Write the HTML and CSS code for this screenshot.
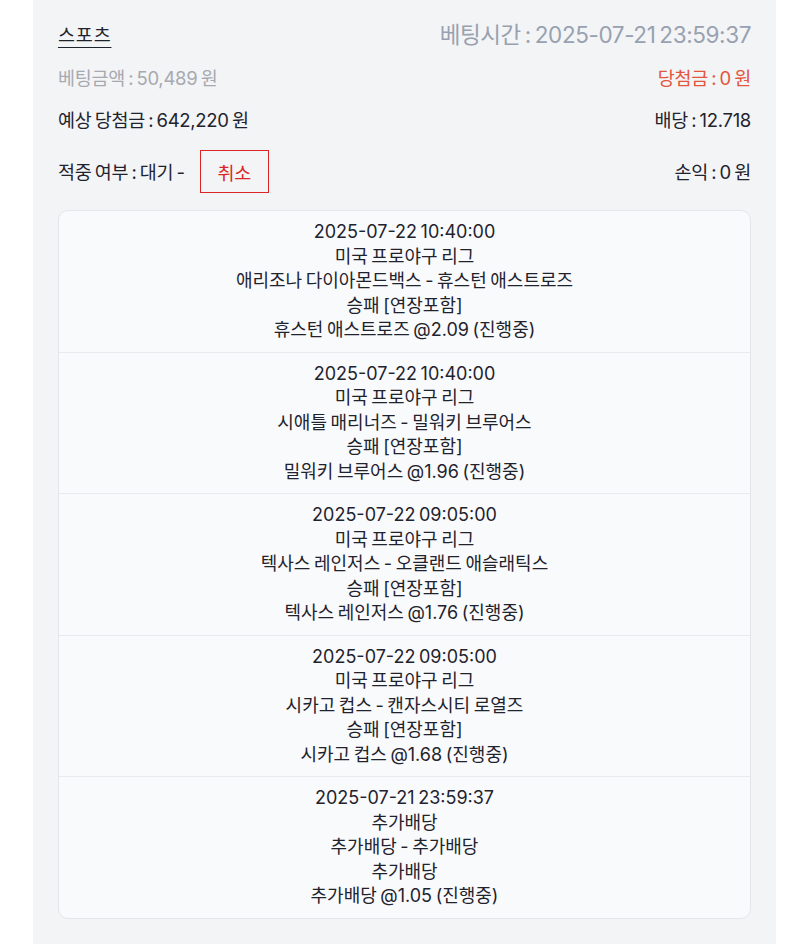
FILE: index.html
```html
<!DOCTYPE html>
<html lang="ko">
<head>
  <meta charset="UTF-8">
  <meta name="viewport" content="width=device-width, initial-scale=1.0">
  <title>베팅 상세</title>
  <link rel="stylesheet" href="styles.css">
</head>
<body>
  <div class="panel">
    <div class="row">
      <a class="game-type">스포츠</a>
      <span class="bet-time">베팅시간 : 2025-07-21 23:59:37</span>
    </div>
    <div class="row">
      <span class="bet-amount">베팅금액 : 50,489 원</span>
      <span class="win-amount">당첨금 : 0 원</span>
    </div>
    <div class="row">
      <span>예상 당첨금 : 642,220 원</span>
      <span>배당 : 12.718</span>
    </div>
    <div class="row row-status">
      <div class="status">
        <span>적중 여부 : 대기 -</span>
        <button class="cancel-btn">취소</button>
      </div>
      <span>손익 : 0 원</span>
    </div>

    <div class="bet-list">
      <div class="bet-item">
        <div>2025-07-22 10:40:00</div>
        <div>미국 프로야구 리그</div>
        <div>애리조나 다이아몬드백스 - 휴스턴 애스트로즈</div>
        <div>승패 [연장포함]</div>
        <div>휴스턴 애스트로즈 @2.09 (진행중)</div>
      </div>
      <div class="bet-item">
        <div>2025-07-22 10:40:00</div>
        <div>미국 프로야구 리그</div>
        <div>시애틀 매리너즈 - 밀워키 브루어스</div>
        <div>승패 [연장포함]</div>
        <div>밀워키 브루어스 @1.96 (진행중)</div>
      </div>
      <div class="bet-item">
        <div>2025-07-22 09:05:00</div>
        <div>미국 프로야구 리그</div>
        <div>텍사스 레인저스 - 오클랜드 애슬래틱스</div>
        <div>승패 [연장포함]</div>
        <div>텍사스 레인저스 @1.76 (진행중)</div>
      </div>
      <div class="bet-item">
        <div>2025-07-22 09:05:00</div>
        <div>미국 프로야구 리그</div>
        <div>시카고 컵스 - 캔자스시티 로열즈</div>
        <div>승패 [연장포함]</div>
        <div>시카고 컵스 @1.68 (진행중)</div>
      </div>
      <div class="bet-item">
        <div>2025-07-21 23:59:37</div>
        <div>추가배당</div>
        <div>추가배당 - 추가배당</div>
        <div>추가배당</div>
        <div>추가배당 @1.05 (진행중)</div>
      </div>
    </div>
  </div>
</body>
</html>
```

FILE: styles.css
```css
* {
  margin: 0;
  padding: 0;
  box-sizing: border-box;
}

body {
  font-family: Inter, "Noto Sans CJK KR", sans-serif;
  font-size: 18.5px;
  letter-spacing: -0.3px;
  word-spacing: -1.6px;
  color: #1f232d;
  background: #ffffff;
}

.panel {
  margin: 0 24px 0 33px;
  min-height: 100vh;
  background: #f3f4f6;
  padding: 20px 25px 26px;
  display: flex;
  flex-direction: column;
  gap: 16px;
}

.row {
  display: flex;
  justify-content: space-between;
  align-items: center;
  line-height: 26px;
}

.row:first-child {
  line-height: 30px;
  margin-bottom: -1px;
}

.game-type {
  color: #1f232d;
  letter-spacing: 0.8px;
  text-decoration: underline;
  text-underline-offset: 5px;
  text-decoration-thickness: 1px;
}

.bet-time {
  font-size: 22.5px;
  word-spacing: -2px;
  letter-spacing: -0.4px;
  color: #98a1b0;
}

.bet-amount {
  color: #a7a9b0;
}

.win-amount {
  color: #e4553d;
}

.row-status {
  margin-top: 1px;
}

.status {
  display: flex;
  align-items: center;
  gap: 15px;
}

.cancel-btn {
  width: 69px;
  height: 43px;
  background: transparent;
  border: 1px solid #dc2626;
  color: #dc2626;
  font-family: inherit;
  font-size: 18.5px;
  letter-spacing: -0.3px;
  cursor: pointer;
}

.bet-list {
  margin-top: 1px;
  background: #f9fafc;
  border: 1px solid #e3e6ea;
  border-radius: 10px;
}

.bet-item {
  padding: 9px 10px 9px;
  text-align: center;
  line-height: 24.5px;
  font-size: 18px;
  letter-spacing: 0;
  word-spacing: -1.5px;
}

.bet-item + .bet-item {
  border-top: 1px solid #e8eaee;
}
```
